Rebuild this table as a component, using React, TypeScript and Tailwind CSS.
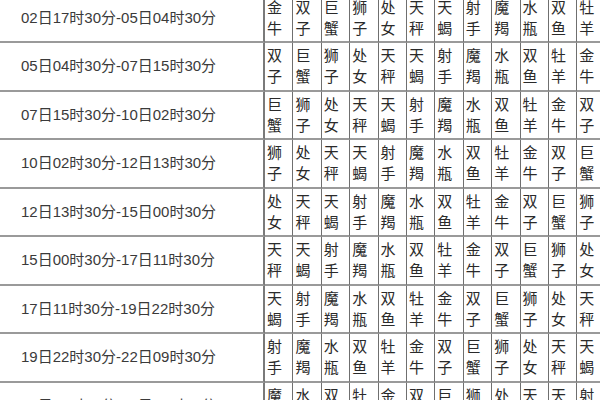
const SIGNS = [
  ["牡", "羊"],
  ["金", "牛"],
  ["双", "子"],
  ["巨", "蟹"],
  ["狮", "子"],
  ["处", "女"],
  ["天", "秤"],
  ["天", "蝎"],
  ["射", "手"],
  ["魔", "羯"],
  ["水", "瓶"],
  ["双", "鱼"],
];

const ROWS = [
  "02日17时30分-05日04时30分",
  "05日04时30分-07日15时30分",
  "07日15时30分-10日02时30分",
  "10日02时30分-12日13时30分",
  "12日13时30分-15日00时30分",
  "15日00时30分-17日11时30分",
  "17日11时30分-19日22时30分",
  "19日22时30分-22日09时30分",
  "22日09时30分-24日20时30分",
];

export default function App() {
  return (
    <div
      className="w-[600px] h-[400px] overflow-hidden bg-white"
      style={{ fontFamily: '"Liberation Sans", "Noto Sans CJK SC", sans-serif' }}
    >
      <div className="-mt-[5.5px] grid grid-cols-[265px_repeat(12,28.4px)] w-max">
        {ROWS.map((range, r) => (
          <div key={r} className="contents">
            <div className="h-[48.5px] flex items-center pl-[21px] text-[15px] text-[#3a3a3a] border-b-2 border-[#9a9a9a] border-r-2 border-r-[#7a7a7a]">
              {range}
            </div>
            {Array.from({ length: 12 }).map((_, c) => {
              const s = SIGNS[(r + 1 + c) % 12];
              return (
                <div
                  key={c}
                  className="h-[48.5px] flex flex-col justify-center pl-[2px] text-[15px] leading-[21px] text-[#2a2a2a] border-b-2 border-[#9a9a9a] border-r border-r-[#6f6f6f]"
                >
                  <span>{s[0]}</span>
                  <span>{s[1]}</span>
                </div>
              );
            })}
          </div>
        ))}
      </div>
    </div>
  );
}
